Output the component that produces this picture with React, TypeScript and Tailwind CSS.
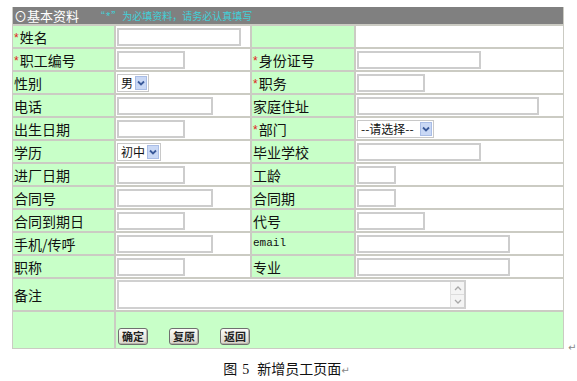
import React from "react";

const CJK = "font-['Noto_Sans_CJK_SC',_'Noto_Sans',_sans-serif]";

function Star() {
  return (
    <span className="text-[12px] leading-none text-[#e02020] font-['Liberation_Sans',_sans-serif] mr-[1px] mt-[3px]">*</span>
  );
}

function Input({ w }: { w: string }) {
  return <div className={`${w} h-[18px] ml-[1px] bg-white border-2 border-[#cdcdcd]`} />;
}

function Arrow() {
  return (
    <div className="w-[12px] h-[14px] ml-auto mr-[1px] bg-[#c9d8f5] border border-[#a9bde6] flex items-center justify-center">
      <svg width="8" height="6" viewBox="0 0 8 6">
        <path d="M1 1.5 L4 4.5 L7 1.5" stroke="#3a5a9a" strokeWidth="1.8" fill="none" />
      </svg>
    </div>
  );
}

function Select({ w, text }: { w: string; text: string }) {
  return (
    <div className={`${w} h-[18px] ml-[1px] bg-white border border-[#c8c8c8] flex items-center pl-[3px] text-[12px] leading-none text-[#111] ${CJK}`}>
      <span>{text}</span>
      <Arrow />
    </div>
  );
}

function Label({ text, star, mono }: { text: string; star?: boolean; mono?: boolean }) {
  return (
    <div className="bg-[#c8ffc8] h-[21px] flex items-center pl-[1px]">
      {star && <Star />}
      {mono ? (
        <span className="text-[11px] leading-none text-[#111] font-['Liberation_Mono',_monospace]">{text}</span>
      ) : (
        <span className={`text-[14px] leading-none text-[#111] ${CJK}`}>{text}</span>
      )}
    </div>
  );
}

function Cell({ children }: { children?: React.ReactNode }) {
  return <div className="bg-white h-[21px] flex items-center">{children}</div>;
}

type Row = {
  l: string;
  ls?: boolean;
  left: React.ReactNode;
  r?: string;
  rs?: boolean;
  rm?: boolean;
  right?: React.ReactNode;
};

const rows: Row[] = [
  { l: "姓名", ls: true, left: <Input w="w-[124px]" />, r: "", right: null },
  { l: "职工编号", ls: true, left: <Input w="w-[68px]" />, r: "身份证号", rs: true, right: <Input w="w-[124px]" /> },
  { l: "性别", left: <Select w="w-[32px]" text="男" />, r: "职务", rs: true, right: <Input w="w-[68px]" /> },
  { l: "电话", left: <Input w="w-[96px]" />, r: "家庭住址", right: <Input w="w-[182px]" /> },
  { l: "出生日期", left: <Input w="w-[68px]" />, r: "部门", rs: true, right: <Select w="w-[77px]" text="--请选择--" /> },
  { l: "学历", left: <Select w="w-[44px]" text="初中" />, r: "毕业学校", right: <Input w="w-[124px]" /> },
  { l: "进厂日期", left: <Input w="w-[68px]" />, r: "工龄", right: <Input w="w-[39px]" /> },
  { l: "合同号", left: <Input w="w-[96px]" />, r: "合同期", right: <Input w="w-[39px]" /> },
  { l: "合同到期日", left: <Input w="w-[68px]" />, r: "代号", right: <Input w="w-[68px]" /> },
  { l: "手机/传呼", left: <Input w="w-[96px]" />, r: "email", rm: true, right: <Input w="w-[153px]" /> },
  { l: "职称", left: <Input w="w-[68px]" />, r: "专业", right: <Input w="w-[153px]" /> },
];

function Btn({ text }: { text: string }) {
  return (
    <div
      className={`w-[30px] h-[17px] rounded-[3px] border border-[#6f6f6f] bg-gradient-to-b from-[#fbfbf8] to-[#d9d6cc] shadow-[inset_-1px_-1px_0_#b8b4a8] flex items-center justify-center text-[11px] leading-none font-bold text-[#222] ${CJK}`}
    >
      {text}
    </div>
  );
}

function Chevron({ up }: { up?: boolean }) {
  return (
    <svg width="8" height="5" viewBox="0 0 8 5">
      <path d={up ? "M1 4 L4 1 L7 4" : "M1 1 L4 4 L7 1"} stroke="#a8a8a8" strokeWidth="1.3" fill="none" />
    </svg>
  );
}

export default function App() {
  return (
    <div className="w-[577px] h-[381px] bg-white relative overflow-hidden">
      <div className="flex items-end">
        <div className="ml-[12px] mt-[7px] w-[552px] bg-[#cbcbc3] px-[1px] pb-[1px] grid grid-cols-[101px_134px_102px_207px] gap-[2px]">
          <div className="col-span-4 h-[17px] bg-[#808080] flex items-center pl-[1px]">
            <span className={`text-[13px] leading-none text-white ${CJK}`}>⊙基本资料</span>
            <span className={`ml-[16px] flex items-center gap-[1px] text-[10px] leading-none text-[#40d0d8] ${CJK}`}>
              <span>“</span>
              <span className="font-['Liberation_Sans',_sans-serif] text-[11px] mt-[2px]">*</span>
              <span>”</span>
              <span>为必填资料，请务必认真填写</span>
            </span>
          </div>
          {rows.map((r, i) => (
            <React.Fragment key={i}>
              <Label text={r.l} star={r.ls} />
              <Cell>{r.left}</Cell>
              <Label text={r.r ?? ""} star={r.rs} mono={r.rm} />
              <Cell>{r.right}</Cell>
            </React.Fragment>
          ))}
          <div className="bg-[#c8ffc8] h-[31px] flex items-center pl-[1px]">
            <span className={`text-[14px] leading-none text-[#111] ${CJK}`}>备注</span>
          </div>
          <div className="col-span-3 bg-white h-[31px] flex items-center">
            <div className="ml-[1px] w-[349px] h-[29px] border-2 border-[#d0d0d0] bg-white flex justify-end">
              <div className="w-[14px] h-full flex flex-col border-l border-[#e0e0e0]">
                <div className="flex-1 flex items-center justify-center bg-[#f4f4f4] border-b border-[#dcdcdc]">
                  <Chevron up />
                </div>
                <div className="flex-1 flex items-center justify-center bg-[#f4f4f4]">
                  <Chevron />
                </div>
              </div>
            </div>
          </div>
          <div className="bg-[#c8ffc8] h-[36px]" />
          <div className="col-span-3 bg-[#c8ffc8] h-[36px] flex items-end pb-[3px] pl-[2px] gap-[21px]">
            <Btn text="确定" />
            <Btn text="复原" />
            <Btn text="返回" />
          </div>
        </div>
        <span className="ml-[4px] mb-[-4px] text-[10px] leading-none text-[#888] font-['DejaVu_Sans',_sans-serif]">↵</span>
      </div>
      <div className="mt-[12px] flex justify-center pr-[4px] items-baseline">
        <span className={`text-[14px] leading-none text-[#111] ${CJK}`}>图</span>
        <span className="ml-[5px] text-[14px] leading-none text-[#111] font-['Liberation_Serif',_serif]">5</span>
        <span className={`ml-[8px] text-[14px] leading-none text-[#111] ${CJK}`}>新增员工页面</span>
        <span className="text-[10px] leading-none text-[#888] font-['DejaVu_Sans',_sans-serif]">↵</span>
      </div>
    </div>
  );
}
